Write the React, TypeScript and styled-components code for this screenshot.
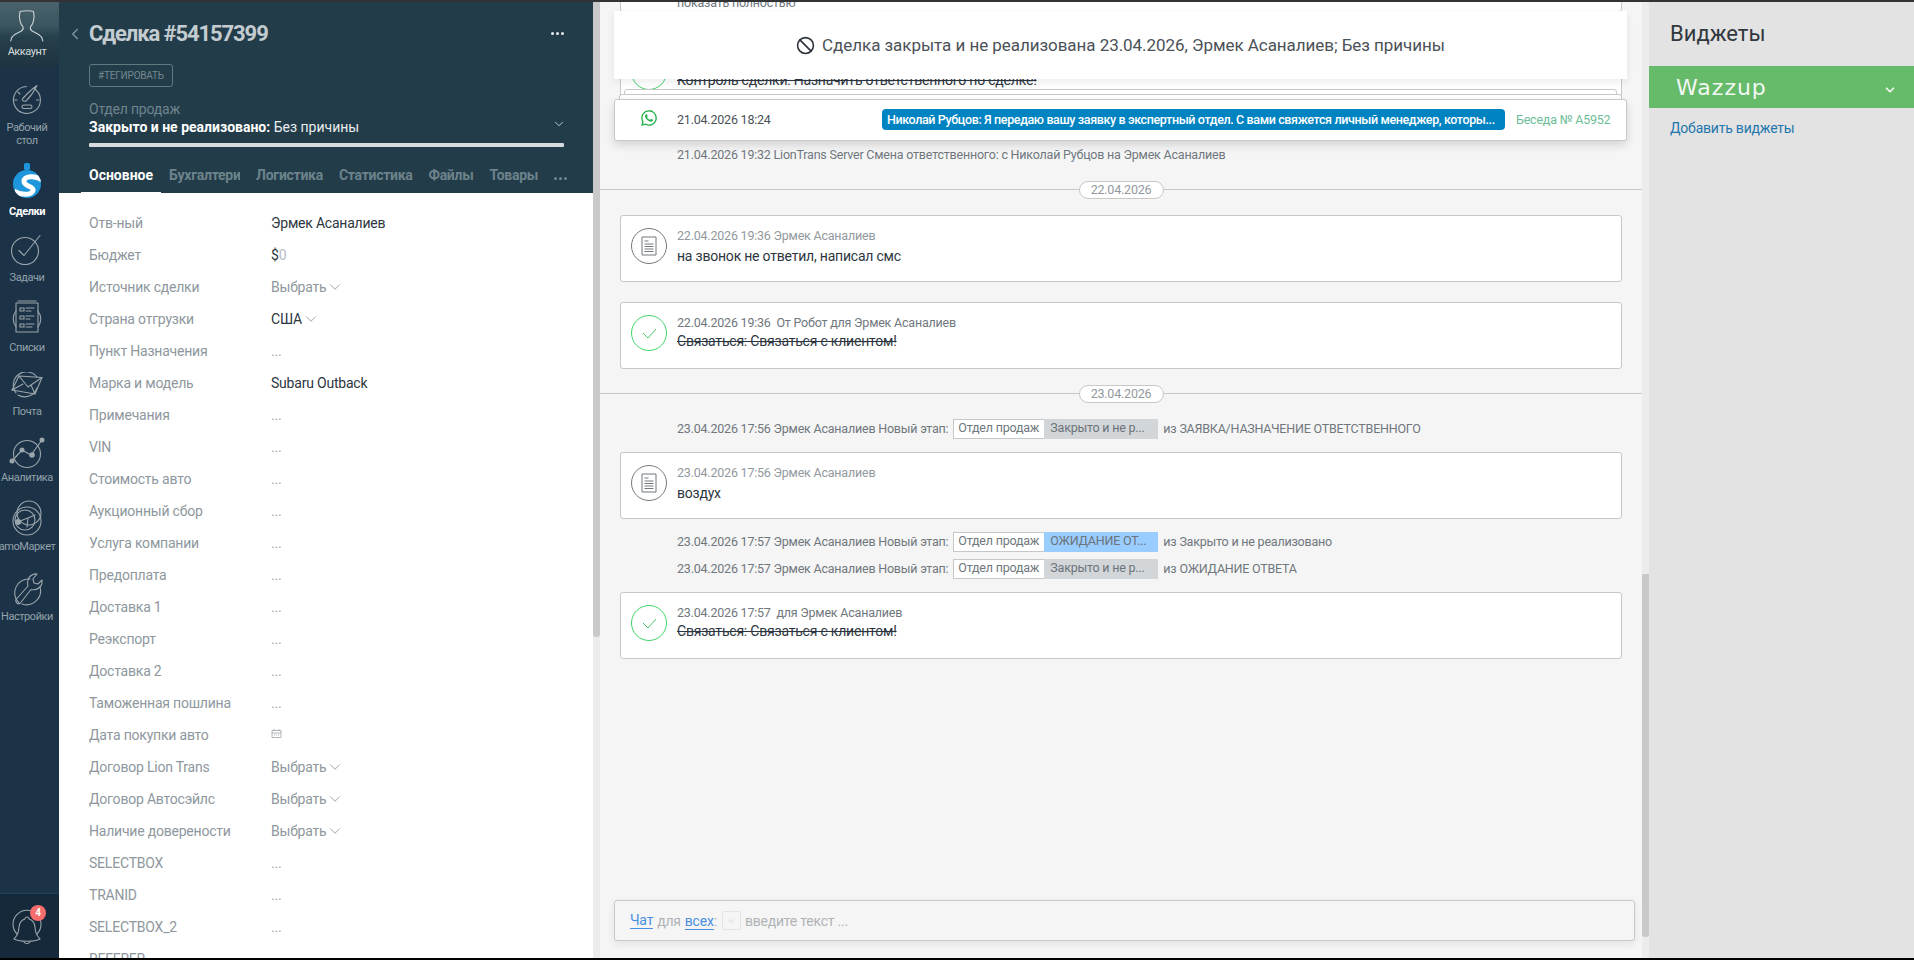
import React from "react";
import styled, { createGlobalStyle } from "styled-components";
import { IoLogoWhatsapp } from "react-icons/io5";
import { Ban, ChevronDown, ChevronLeft } from "lucide-react";

const font = `"Roboto", "Liberation Sans", sans-serif`;

const GlobalStyle = createGlobalStyle`
  html, body {
    margin: 0;
    height: 100%;
    overflow: hidden;
    background: #000;
  }
  * { box-sizing: border-box; }
  body {
    font-family: ${font};
    font-size: 14px;
    letter-spacing: -0.015em;
  }
`;

const Page = styled.div`
  width: 1914px;
  height: 960px;
  display: flex;
  flex-direction: column;
  border-top: 2px solid #333;
  border-bottom: 2px solid #000;
  overflow: hidden;
`;

const Main = styled.div`
  flex: 1;
  min-height: 0;
  display: flex;
`;

/* left nav */
const Sidebar = styled.nav`
  width: 59px;
  flex: none;
  display: flex;
  flex-direction: column;
  background: #1c3347;
`;

const Account = styled.div`
  height: 64px;
  flex: none;
  display: flex;
  flex-direction: column;
  align-items: center;
  padding: 8px 5px 0 0;
  background: linear-gradient(180deg, #4a626c 0%, #3a5560 38%, #26404b 55%, #1f3440 100%);
`;

const NavList = styled.div`
  flex: 1;
  padding-top: 19px;
`;

const NavItem = styled.div<{ $h: number }>`
  width: 54px;
  height: ${(p) => p.$h}px;
  display: flex;
  flex-direction: column;
  align-items: center;
`;

const NavIcon = styled.div`
  height: 36px;
  flex: none;
  display: flex;
  align-items: flex-start;
  justify-content: center;
`;

const NavLabel = styled.div<{ $mt?: number; $active?: boolean; $bright?: boolean }>`
  margin-top: ${(p) => p.$mt ?? 0}px;
  width: 54px;
  white-space: nowrap;
  display: flex;
  justify-content: center;
  font-size: 11px;
  line-height: 13px;
  letter-spacing: -0.04em;
  text-align: center;
  color: ${(p) => (p.$active ? "#fff" : p.$bright ? "#d5dcdf" : "#93a2ab")};
  font-weight: ${(p) => (p.$active ? 700 : 400)};
`;

const Bell = styled.div`
  height: 65px;
  flex: none;
  position: relative;
  display: flex;
  align-items: center;
  padding: 4px 0 0 12px;
  background: #16293a;
  border-top: 1px solid #21405a;
`;

const BellBadge = styled.span`
  position: absolute;
  top: 11px;
  left: 30px;
  width: 16px;
  height: 16px;
  border-radius: 50%;
  background: #f76c6c;
  color: #fff;
  font-size: 10px;
  font-weight: 700;
  line-height: 16px;
  text-align: center;
`;

/* deal panel */
const DealPanel = styled.section`
  width: 534px;
  flex: none;
  display: flex;
  flex-direction: column;
  background: #fff;
`;

const DealHeader = styled.header`
  height: 191px;
  flex: none;
  padding-left: 30px;
  padding-right: 29px;
  background: #233c4a;
`;

const TitleRow = styled.div`
  height: 62px;
  display: flex;
  align-items: center;
  position: relative;
`;

const BackIcon = styled(ChevronLeft)`
  position: absolute;
  left: -23px;
  top: 23px;
  color: #7f929b;
`;

const Title = styled.h1`
  margin: 0;
  flex: 1;
  font-size: 22px;
  font-weight: 700;
  letter-spacing: -0.05em;
  color: #c3ccd0;
`;

const Dots = styled.span<{ $dim?: boolean }>`
  display: inline-flex;
  gap: 2px;
  & > i {
    width: 3px;
    height: 3px;
    border-radius: 50%;
    background: ${(p) => (p.$dim ? "#6f858f" : "#e8ecee")};
  }
`;

const TagButton = styled.div`
  width: 84px;
  height: 23px;
  border: 1px solid #63777f;
  border-radius: 3px;
  font-size: 10px;
  line-height: 21px;
  text-align: center;
  color: #73878f;
`;

const PipelineLabel = styled.div`
  margin-top: 14px;
  font-size: 14px;
  line-height: 16px;
  color: #6f848d;
`;

const StatusRow = styled.div`
  height: 20px;
  display: flex;
  align-items: center;
  justify-content: space-between;
  font-size: 14px;
  letter-spacing: 0;
  color: #e9edef;
  & > svg {
    margin: -6px -2px 0 0;
    color: #d0d8dc;
  }
  & b {
    color: #fff;
    font-weight: 700;
  }
`;

const StatusBar = styled.div`
  height: 4px;
  margin-top: 6px;
  border-radius: 1px;
  background: #d9dcde;
`;

const Tabs = styled.div`
  height: 48px;
  display: flex;
  align-items: flex-end;
  gap: 16px;
`;

const Tab = styled.div<{ $active?: boolean; $width?: number }>`
  position: relative;
  height: 38px;
  padding-top: 8px;
  line-height: 20px;
  font-size: 14px;
  font-weight: 700;
  letter-spacing: ${(p) => (p.$active ? "0" : "-0.02em")};
  white-space: nowrap;
  width: ${(p) => (p.$width ? `${p.$width}px` : "auto")};
  color: ${(p) => (p.$active ? "#fff" : "#6d838c")};
  ${(p) =>
    p.$active &&
    `&::after {
      content: "";
      position: absolute;
      left: -8px;
      right: -8px;
      bottom: 0;
      height: 3px;
      background: #fff;
    }`}
`;

const TabClip = styled.div`
  width: 100%;
  overflow: hidden;
`;

const Fields = styled.div`
  flex: 1;
  min-height: 0;
  overflow: hidden;
  padding: 14px 0 0 30px;
`;

const FieldRow = styled.div`
  height: 32px;
  display: flex;
  align-items: center;
  font-size: 14px;
`;

const FieldLabel = styled.div`
  width: 182px;
  flex: none;
  color: #8e979d;
`;

const FieldValue = styled.div<{ $tone?: "dark" | "muted" | "empty" }>`
  display: flex;
  align-items: center;
  color: ${(p) =>
    p.$tone === "dark" ? "#2d3640" : p.$tone === "empty" ? "#9fa6ab" : "#8e979d"};
  & > svg {
    color: #8e979d;
  }
`;

const BudgetZero = styled.span`
  color: #b6bcc1;
`;

const CalendarSvg = styled.svg`
  margin-top: -4px;
`;

const ScrollTrack = styled.div`
  width: 7px;
  flex: none;
  background: #ececec;
`;

const ScrollThumb = styled.div<{ $top: number; $height: number }>`
  margin-top: ${(p) => p.$top}px;
  height: ${(p) => p.$height}px;
  background: #c9c9c9;
  border-radius: 0 0 3px 3px;
`;

/* feed */
const Feed = styled.section`
  width: 1042px;
  flex: none;
  position: relative;
  display: flex;
  flex-direction: column;
  background: #f5f5f5;
`;

const FeedScroll = styled.div`
  flex: 1;
  min-height: 0;
  overflow: hidden;
`;

const Card = styled.div<{ $mt: number; $h: number }>`
  margin: ${(p) => p.$mt}px 20px 0;
  height: ${(p) => p.$h}px;
  display: flex;
  align-items: flex-start;
  padding: 12px 10px;
  gap: 10px;
  background: #fff;
  border: 1px solid #c8c8c8;
  border-radius: 3px;
`;

const CardBody = styled.div`
  min-width: 0;
`;

const CardSvg = styled.svg`
  display: block;
  flex: none;
  fill: none;
`;

const CardMeta = styled.div<{ $dark?: boolean }>`
  font-size: 12.5px;
  line-height: 16px;
  color: ${(p) => (p.$dark ? "#70777d" : "#92999e")};
`;

const CardText = styled.div<{ $done?: boolean }>`
  margin-top: ${(p) => (p.$done ? 0 : 2)}px;
  font-size: 14px;
  line-height: 20px;
  color: #2d3640;
  text-decoration: ${(p) => (p.$done ? "line-through" : "none")};
`;

const ExpandLink = styled.div`
  padding-left: 46px;
  margin-top: 21px;
  font-size: 12.5px;
  line-height: 14px;
  color: #70777d;
`;

const EventRow = styled.div<{ $mt: number }>`
  margin-top: ${(p) => p.$mt}px;
  padding: 0 0 2px 77px;
  height: 20px;
  display: flex;
  align-items: center;
  font-size: 12.5px;
  white-space: nowrap;
  color: #70777d;
`;

const StageChips = styled.div`
  display: flex;
  height: 20px;
  margin: 2px 5px 0;
`;

const DeptChip = styled.div`
  width: 91px;
  padding-left: 4px;
  background: #fff;
  border: 1px solid #c4c8cb;
  border-right: none;
  line-height: 16px;
  color: #70777d;
`;

const StageChip = styled.div<{ $bg: string }>`
  width: 114px;
  padding-left: 6px;
  line-height: 18px;
  overflow: hidden;
  background: ${(p) => p.$bg};
  color: #6c7379;
`;

const DateDivider = styled.div<{ $mt: number }>`
  margin-top: ${(p) => p.$mt}px;
  height: 18px;
  position: relative;
  display: flex;
  justify-content: center;
  &::before {
    content: "";
    position: absolute;
    left: 0;
    right: 0;
    top: 8px;
    border-top: 1px solid #c8c8c8;
  }
`;

const DatePill = styled.div`
  position: relative;
  width: 85px;
  height: 18px;
  border: 1px solid #c8c8c8;
  border-radius: 9px;
  background: #fff;
  font-size: 12.5px;
  line-height: 16px;
  text-align: center;
  color: #92999e;
`;

const Notice = styled.div`
  position: absolute;
  top: 9px;
  left: 14px;
  width: 1013px;
  height: 68px;
  display: flex;
  align-items: center;
  justify-content: center;
  gap: 7px;
  background: #fff;
  font-size: 17px;
  letter-spacing: -0.003em;
  color: #4b5157;
  box-shadow: 0 3px 8px rgba(0, 0, 0, 0.08);
  & > svg {
    color: #2c3238;
  }
`;

const StackedEdge = styled.div<{ $top: number; $inset: number }>`
  position: absolute;
  top: ${(p) => p.$top}px;
  left: ${(p) => 14 + p.$inset}px;
  width: ${(p) => 1013 - p.$inset * 2}px;
  height: 20px;
  background: #fff;
  border: 1px solid #c8c8c8;
  border-radius: 3px;
`;

const Pinned = styled.div`
  position: absolute;
  top: 97px;
  left: 14px;
  width: 1013px;
  height: 42px;
  padding-bottom: 1px;
  display: flex;
  align-items: center;
  background: #fff;
  border: 1px solid #c8c8c8;
  border-radius: 3px;
  box-shadow: 0 4px 10px rgba(0, 0, 0, 0.14);
  font-size: 12.5px;
  color: #4b5157;
`;

const PinnedIcon = styled.div`
  width: 62px;
  padding-left: 25px;
  flex: none;
  display: flex;
  margin-top: -3px;
  color: #25b24a;
`;

const PinnedDate = styled.div`
  width: 205px;
  flex: none;
`;

const PinnedMessage = styled.div`
  width: 623px;
  flex: none;
  height: 21px;
  padding: 0 5px;
  border-radius: 4px;
  background: #0083c1;
  color: #fff;
  font-weight: 500;
  letter-spacing: -0.03em;
  line-height: 21px;
  white-space: nowrap;
  overflow: hidden;
  text-overflow: ellipsis;
`;

const PinnedTalk = styled.div`
  margin-left: 11px;
  color: #6dbd98;
`;

const Composer = styled.div`
  flex: none;
  height: 41px;
  margin: 0 7px 17px 14px;
  padding-left: 15px;
  display: flex;
  align-items: center;
  gap: 4px;
  background: #f5f5f5;
  border: 1px solid #c8c8c8;
  border-radius: 3px;
  box-shadow: 0 3px 8px rgba(0, 0, 0, 0.08);
  font-size: 14px;
  color: #b0b3b5;
`;

const ComposerLink = styled.span`
  color: #4a8fe0;
  border-bottom: 1px solid #4a8fe0;
  line-height: 15px;
`;

const ComposerSelect = styled.span`
  width: 19px;
  height: 19px;
  margin-left: 1px;
  display: inline-flex;
  align-items: center;
  justify-content: center;
  border: 1px solid #e4e4e4;
  border-radius: 2px;
  color: #aaa;
`;

/* widgets */
const Widgets = styled.aside`
  flex: 1;
  background: #e3e3e3;
`;

const WidgetsTitle = styled.h2`
  margin: 0;
  height: 64px;
  padding: 20px 0 0 21px;
  font-size: 22px;
  line-height: 24px;
  font-weight: 400;
  letter-spacing: 0;
  color: #30373d;
`;

const WidgetBar = styled.div`
  height: 42px;
  padding: 0 16px 0 27px;
  display: flex;
  align-items: center;
  justify-content: space-between;
  background: #66bb6a;
  color: #f1f8f1;
  & > svg {
    margin: 6px 1px 0 0;
  }
`;

const WidgetName = styled.span`
  font-family: "DejaVu Sans", sans-serif;
  font-size: 22px;
  letter-spacing: 1px;
`;

const AddWidgets = styled.div`
  margin: 11px 0 0 21px;
  font-size: 14px;
  line-height: 18px;
  color: #1f77ad;
`;

/* sidebar drawings */
const IconSvg = styled.svg<{ $color?: string }>`
  flex: none;
  fill: none;
  stroke: ${(p) => p.$color ?? "#9aa5ac"};
  stroke-width: 1.1;
  stroke-linecap: round;
  stroke-linejoin: round;
  display: block;
`;

const PersonIcon = () => (
  <IconSvg $color="#c9d1d5" width="36" height="34" viewBox="0 0 36 34">
    <path d="M11 1.5c4-1 11-1 13.5 0 .8 3 .8 7-.3 10.5-.6 2-1.5 3.5-2.700 4.800-.5 1.500 0 3.200 2 4.500 2.500 1.500 6 2.500 8.500 5.200 1 1 1.500 3 1.800 4.500M11 1.500c-.8 3-.8 7 .3 10.500.6 2 1.500 3.500 2.700 4.800.5 1.500 0 3.200-2 4.500-2.500 1.500-6 2.500-8.500 5.200-1 1-1.500 3-1.800 4.500" />
  </IconSvg>
);

const GaugeIcon = () => (
  <IconSvg width="30" height="30" viewBox="0 0 30 30">
    <path d="M22 3.500A13.500 13.500 0 1 1 14.500 1.500" />
    <path d="M6 7l2 2M2.500 15H5M24.500 15H27" />
    <path d="M10.500 14c1-1.500 9-10 14.500-13.500-3 6-8.500 13-10.500 15-1.500 1.400-5 .5-4-1.500z" />
    <rect x="10" y="20" width="10" height="3.500" rx="1.700" />
  </IconSvg>
);

const DealsIcon = () => (
  <svg width="28" height="36" viewBox="0 0 28 36">
    <defs>
      <clipPath id="deals-round"><circle cx="14" cy="21" r="14" /></clipPath>
    </defs>
    <rect x="11" y="0" width="6" height="7" rx="1.500" fill="#1e96dc" />
    <circle cx="14" cy="21" r="14" fill="#1e96dc" />
    <path
      d="M1 28C9 33 19 32 20 27.500 21 23 11 23.500 11 18.500 11 13 22 12 29 17"
      fill="none"
      stroke="#fff"
      strokeWidth="5"
      clipPath="url(#deals-round)"
    />
  </svg>
);

const TasksIcon = () => (
  <IconSvg width="32" height="30" viewBox="0 0 32 30">
    <circle cx="14" cy="16" r="13.500" />
    <path d="M8 15.500l5 5L29 0.500" />
  </IconSvg>
);

const ListsIcon = () => (
  <IconSvg width="32" height="36" viewBox="0 0 32 36">
    <path d="M5 11a13 13 0 0 0 0 16M27 11a13 13 0 0 1 0 16" />
    <path d="M7 1h18M5 3h22v29H5z" />
    <path d="M9 8h4v3H9zM9 16h4v3H9zM9 24h4v3H9zM15 8h8M15 11h5M15 16h8M15 19h4M15 24h8M15 27h6" />
  </IconSvg>
);

const MailIcon = () => (
  <IconSvg width="32" height="28" viewBox="0 0 32 28">
    <path d="M5 21A13 13 0 0 1 26 5" />
    <path d="M7 23a13 13 0 0 0 19-7" />
    <path d="M1 18l7-14 23 1.500-7 16.500z" />
    <path d="M8 4l9 11L31 5.500M1 18l11-6M24 22l-4-9" />
  </IconSvg>
);

const AnalyticsIcon = () => (
  <IconSvg width="38" height="32" viewBox="0 0 38 32">
    <circle cx="19" cy="17" r="13.500" />
    <path d="M4 24L14 13l9 5L34 3" strokeWidth="1.200" />
    <g fill="#9aa5ac" stroke="none">
      <circle cx="4" cy="24" r="2.500" />
      <circle cx="14" cy="13" r="2.500" />
      <circle cx="24" cy="18" r="2.800" />
      <circle cx="34" cy="3" r="2.500" />
    </g>
  </IconSvg>
);

const MarketIcon = () => (
  <IconSvg width="32" height="36" viewBox="0 0 32 36">
    <circle cx="16" cy="21" r="14" />
    <circle cx="18" cy="13" r="12" />
    <circle cx="14" cy="20" r="10" />
    <path d="M17 18l-1 9M17 18l7-3M17 18l-8 3" />
    <circle cx="7" cy="22" r="3" fill="#9aa5ac" stroke="none" />
  </IconSvg>
);

const SettingsIcon = () => (
  <IconSvg width="32" height="34" viewBox="0 0 32 34">
    <path d="M19 7A14 14 0 0 0 8 31M29 15a14 14 0 0 1-18 17" />
    <path d="M5 27.500L17 14c-1-4 0-8 3-10.500 1.500-1 4-2 6-1.500l-4 5 1 4 4 1 4-4c.5 3-.5 5.500-2 7-2.500 2.500-6 3.200-9 2.500L9 31.500c-1.500 1-5-.5-4-4z" />
  </IconSvg>
);

const BellIcon = () => (
  <IconSvg width="30" height="38" viewBox="0 0 30 38">
    <path d="M5 25a14 14 0 1 1 20 0" />
    <path d="M15 8a2 2 0 0 0-2 2c-4 1-5.500 4-6 8-.5 5-1 8-5 12 6 3 20 3 26 0-4-4-4.500-7-5-12-.5-4-2-7-6-8a2 2 0 0 0-2-2z" />
    <path d="M12 33c1 2 5 2 6 0" />
  </IconSvg>
);

const DocIcon = () => (
  <CardSvg width="36" height="36" viewBox="0 0 36 36" stroke="#73787c">
    <circle cx="18" cy="18" r="17.500" />
    <path d="M11 9h14v18H11z" />
    <path d="M13.500 13h4M13.500 16h9M13.500 18.500h9M13.500 21h9M13.500 23.500h9" />
  </CardSvg>
);

const DoneIcon = () => (
  <CardSvg width="36" height="36" viewBox="0 0 36 36">
    <circle cx="18" cy="18" r="17.500" stroke="#3fd468" />
    <path d="M12 18l5 5 8-9" stroke="#49c96c" />
  </CardSvg>
);

const CalendarIcon = () => (
  <CalendarSvg width="11" height="11" viewBox="0 0 11 11" fill="none" stroke="#9ea5aa" strokeWidth="0.8">
    <path d="M1 2.500h9v7H1zM1 5h9M3 1v2M8 1v2M3 7h1M5 7h1M7 7h1" />
  </CalendarSvg>
);

type NavEntry = { label: React.ReactNode; h: number; mt: number; icon: React.ReactNode; active?: boolean };

const navItems: NavEntry[] = [
  { label: <span>Рабочий<br />стол</span>, h: 78, mt: 0, icon: <GaugeIcon /> },
  { label: "Сделки", h: 72, mt: 6, icon: <DealsIcon />, active: true },
  { label: "Задачи", h: 65, mt: 0, icon: <TasksIcon /> },
  { label: "Списки", h: 72, mt: 5, icon: <ListsIcon /> },
  { label: "Почта", h: 65, mt: -3, icon: <MailIcon /> },
  { label: "Аналитика", h: 63, mt: -2, icon: <AnalyticsIcon /> },
  { label: "amoМаркет", h: 72, mt: 4, icon: <MarketIcon /> },
  { label: "Настройки", h: 60, mt: 2, icon: <SettingsIcon /> },
];

type FieldEntry = [string, string];

const fields: FieldEntry[] = [
  ["Отв-ный", "Эрмек Асаналиев"],
  ["Бюджет", "budget"],
  ["Источник сделки", "pick"],
  ["Страна отгрузки", "США"],
  ["Пункт Назначения", "dots"],
  ["Марка и модель", "Subaru Outback"],
  ["Примечания", "dots"],
  ["VIN", "dots"],
  ["Стоимость авто", "dots"],
  ["Аукционный сбор", "dots"],
  ["Услуга компании", "dots"],
  ["Предоплата", "dots"],
  ["Доставка 1", "dots"],
  ["Реэкспорт", "dots"],
  ["Доставка 2", "dots"],
  ["Таможенная пошлина", "dots"],
  ["Дата покупки авто", "date"],
  ["Договор Lion Trans", "pick"],
  ["Договор Автосэйлс", "pick"],
  ["Наличие довереноcти", "pick"],
  ["SELECTBOX", "dots"],
  ["TRANID", "dots"],
  ["SELECTBOX_2", "dots"],
  ["REFERER", "dots"],
];

function renderValue(value: string) {
  if (value === "dots") return <FieldValue $tone="empty">...</FieldValue>;
  if (value === "date") return <FieldValue><CalendarIcon /></FieldValue>;
  if (value === "budget") return <FieldValue $tone="dark"><span>$<BudgetZero>0</BudgetZero></span></FieldValue>;
  if (value === "pick") {
    return <FieldValue $tone="muted">Выбрать<ChevronDown size={18} strokeWidth={1.2} /></FieldValue>;
  }
  if (value === "США") {
    return <FieldValue $tone="dark">США<ChevronDown size={18} strokeWidth={1.2} /></FieldValue>;
  }
  return <FieldValue $tone="dark">{value}</FieldValue>;
}

function StageEvent({ mt, time, stage, bg, from }: { mt: number; time: string; stage: string; bg: string; from: string }) {
  return (
    <EventRow $mt={mt}>
      {time} Эрмек Асаналиев Новый этап:
      <StageChips>
        <DeptChip>Отдел продаж</DeptChip>
        <StageChip $bg={bg}>{stage}</StageChip>
      </StageChips>
      из {from}
    </EventRow>
  );
}

export default function App() {
  return (
    <>
      <GlobalStyle />
      <Page>
        <Main>
          <Sidebar>
            <Account>
              <PersonIcon />
              <NavLabel $mt={1} $bright>Аккаунт</NavLabel>
            </Account>
            <NavList>
              {navItems.map((item, i) => (
                <NavItem key={i} $h={item.h}>
                  <NavIcon>{item.icon}</NavIcon>
                  <NavLabel $mt={item.mt} $active={item.active}>{item.label}</NavLabel>
                </NavItem>
              ))}
            </NavList>
            <Bell>
              <BellIcon />
              <BellBadge>4</BellBadge>
            </Bell>
          </Sidebar>

          <DealPanel>
            <DealHeader>
              <TitleRow>
                <BackIcon size={18} strokeWidth={2} />
                <Title>Сделка #54157399</Title>
                <Dots><i /><i /><i /></Dots>
              </TitleRow>
              <TagButton>#ТЕГИРОВАТЬ</TagButton>
              <PipelineLabel>Отдел продаж</PipelineLabel>
              <StatusRow>
                <span><b>Закрыто и не реализовано:</b> Без причины</span>
                <ChevronDown size={14} strokeWidth={1.5} />
              </StatusRow>
              <StatusBar />
              <Tabs>
                <Tab $active>Основное</Tab>
                <Tab $width={71}><TabClip>Бухгалтерия</TabClip></Tab>
                <Tab>Логистика</Tab>
                <Tab>Статистика</Tab>
                <Tab>Файлы</Tab>
                <Tab>Товары</Tab>
                <Tab><Dots $dim><i /><i /><i /></Dots></Tab>
              </Tabs>
            </DealHeader>
            <Fields>
              {fields.map(([label, value]) => (
                <FieldRow key={label}>
                  <FieldLabel>{label}</FieldLabel>
                  {renderValue(value)}
                </FieldRow>
              ))}
            </Fields>
          </DealPanel>

          <ScrollTrack>
            <ScrollThumb $top={0} $height={635} />
          </ScrollTrack>

          <Feed>
            <FeedScroll>
              <Card $mt={-40} $h={50}>
                <ExpandLink>показать полностью</ExpandLink>
              </Card>
              <Card $mt={29} $h={67}>
                <DoneIcon />
                <CardBody>
                  <CardMeta $dark>21.04.2026 18:20 От Робот для Николай Рубцов</CardMeta>
                  <CardText $done>Контроль сделки: Назначить ответственного по сделке!</CardText>
                </CardBody>
              </Card>
              <EventRow $mt={37}>21.04.2026 19:32 LionTrans Server Смена ответственного: с Николай Рубцов на Эрмек Асаналиев</EventRow>
              <DateDivider $mt={16}><DatePill>22.04.2026</DatePill></DateDivider>
              <Card $mt={16} $h={67}>
                <DocIcon />
                <CardBody>
                  <CardMeta>22.04.2026 19:36 Эрмек Асаналиев</CardMeta>
                  <CardText>на звонок не ответил, написал смс</CardText>
                </CardBody>
              </Card>
              <Card $mt={20} $h={67}>
                <DoneIcon />
                <CardBody>
                  <CardMeta $dark>22.04.2026 19:36&nbsp; От Робот для Эрмек Асаналиев</CardMeta>
                  <CardText $done>Связаться: Связаться с клиентом!</CardText>
                </CardBody>
              </Card>
              <DateDivider $mt={16}><DatePill>23.04.2026</DatePill></DateDivider>
              <StageEvent mt={16} time="23.04.2026 17:56" stage="Закрыто и не р..." bg="#d2d6d9" from="ЗАЯВКА/НАЗНАЧЕНИЕ ОТВЕТСТВЕННОГО" />
              <Card $mt={13} $h={67}>
                <DocIcon />
                <CardBody>
                  <CardMeta>23.04.2026 17:56 Эрмек Асаналиев</CardMeta>
                  <CardText>воздух</CardText>
                </CardBody>
              </Card>
              <StageEvent mt={13} time="23.04.2026 17:57" stage="ОЖИДАНИЕ ОТ..." bg="#99ccff" from="Закрыто и не реализовано" />
              <StageEvent mt={7} time="23.04.2026 17:57" stage="Закрыто и не р..." bg="#d2d6d9" from="ОЖИДАНИЕ ОТВЕТА" />
              <Card $mt={13} $h={67}>
                <DoneIcon />
                <CardBody>
                  <CardMeta $dark>23.04.2026 17:57&nbsp; для Эрмек Асаналиев</CardMeta>
                  <CardText $done>Связаться: Связаться с клиентом!</CardText>
                </CardBody>
              </Card>
            </FeedScroll>

            <Composer>
              <ComposerLink>Чат</ComposerLink> для <span><ComposerLink>всех</ComposerLink>:</span>
              <ComposerSelect><ChevronDown size={10} strokeWidth={1} /></ComposerSelect>
              введите текст ...
            </Composer>

            <Notice><Ban size={19} strokeWidth={2} />Сделка закрыта и не реализована 23.04.2026, Эрмек Асаналиев; Без причины</Notice>
            <StackedEdge $top={87} $inset={10} />
            <StackedEdge $top={92} $inset={5} />
            <Pinned>
              <PinnedIcon><IoLogoWhatsapp size={18} /></PinnedIcon>
              <PinnedDate>21.04.2026 18:24</PinnedDate>
              <PinnedMessage>Николай Рубцов: Я передаю вашу заявку в экспертный отдел. С вами свяжется личный менеджер, которы...</PinnedMessage>
              <PinnedTalk>Беседа № A5952</PinnedTalk>
            </Pinned>
          </Feed>

          <ScrollTrack>
            <ScrollThumb $top={572} $height={363} />
          </ScrollTrack>

          <Widgets>
            <WidgetsTitle>Виджеты</WidgetsTitle>
            <WidgetBar>
              <WidgetName>Wazzup</WidgetName>
              <ChevronDown size={14} strokeWidth={3} />
            </WidgetBar>
            <AddWidgets>Добавить виджеты</AddWidgets>
          </Widgets>
        </Main>
      </Page>
    </>
  );
}
